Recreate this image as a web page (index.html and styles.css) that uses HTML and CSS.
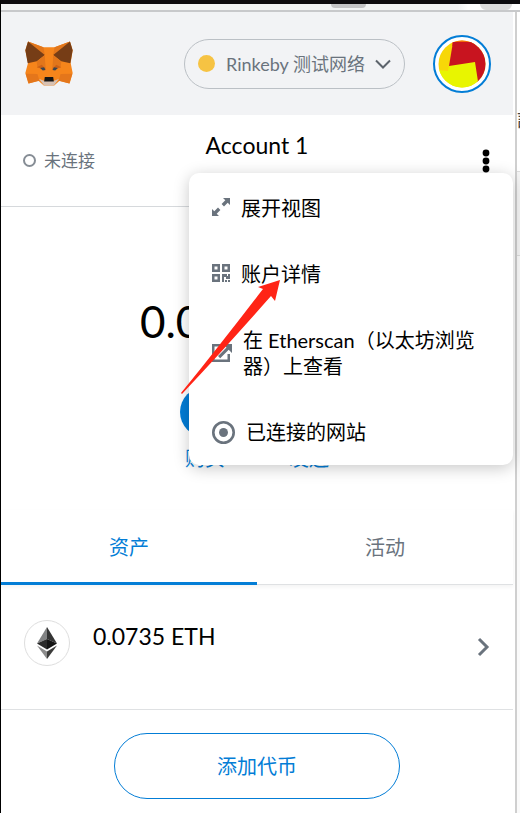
FILE: index.html
```html
<!DOCTYPE html>
<html lang="zh-CN">
<head>
  <meta charset="UTF-8">
  <meta name="viewport" content="width=device-width, initial-scale=1.0">
  <title>MetaMask</title>
  <link rel="stylesheet" href="styles.css">
</head>
<body>
  <div class="browser-strip">
    <span class="strip-tab"></span>
    <span class="strip-avatar"></span>
  </div>

  <div class="window">
    <main class="popup">
      <header class="app-header">
        <svg class="fox" viewBox="75 125 143 133" aria-label="MetaMask">
          <path fill="#f6851b" d="M84 126l46 17h33l46-17 8 26-6 38 6 30-9 31-30-8-16 14h-31l-16-14-30 8-9-31 8-30-8-38z"/>
          <path fill="#e2761b" d="M84 126l46 17 4 23zM209 126l-46 17-4 23z"/>
          <path fill="#763d16" d="M84 126l50 40-24 19-27 6-7-39zM209 126l-50 40 24 19 27 6 7-39z"/>
          <path fill="#e4761b" d="M77 222l35 1 6 20-32 8zM216 222l-35 1-6 20 32 8z"/>
          <path fill="#e2761b" d="M134 166l-24 20 2 18 26 6zM159 166l24 20-2 18-26 6z"/>
          <path fill="#cd6116" d="M110 203l15-8 12 14zM183 203l-15-8-12 14z"/>
          <path fill="#f6851b" d="M134 166h25l-5 66h-15z"/>
          <path fill="#3d4650" d="M120 205l12-2 4 8-8 1zM173 205l-12-2-4 8 8 1z"/>
          <path fill="#d7c1b3" d="M117 238l17 6h25l17-6-15 19h-29z"/>
          <path fill="#161616" d="M134 232h25l2 13h-29z"/>
        </svg>
        <button class="network" type="button">
          <span class="network-dot"></span>
          <span class="network-name">Rinkeby 测试网络</span>
          <svg class="chevron" viewBox="0 0 16 10"><path d="M1 1.500l7 7 7-7"/></svg>
        </button>
        <button class="identicon" type="button" aria-label="我的账户">
          <svg viewBox="0 0 48 48">
            <clipPath id="disc"><circle cx="24" cy="24" r="23.500"/></clipPath>
            <g clip-path="url(#disc)">
              <path fill="#f7d708" d="M0 0h48v48H0z"/>
              <path fill="#f3690c" d="M14 0h26v6H14z"/>
              <path fill="#c8141f" d="M15 2h33v42l-8-1-29-17z"/>
              <path fill="#e8f500" d="M0 30l10 1 1-5 26-4 4 26H0z"/>
            </g>
          </svg>
        </button>
      </header>

      <section class="menu-bar">
        <div class="status"><span class="status-dot"></span>未连接</div>
        <h1 class="account-name">Account 1</h1>
        <button class="more" type="button" aria-label="账户选项">
          <svg viewBox="0 0 8 24"><circle cx="4" cy="4" r="3.400"/><circle cx="4" cy="12" r="3.400"/><circle cx="4" cy="20" r="3.400"/></svg>
        </button>

        <div class="account-menu">
          <button class="menu-item" type="button">
            <svg class="icon" viewBox="0 0 20 20">
              <path d="M12 0h7v7l-2.300-2.300-3.700 3.700-2.400-2.400 3.700-3.700zM8 18H1v-7l2.300 2.300 3.700-3.700 2.400 2.400-3.700 3.700z"/>
            </svg>
            <span>展开视图</span>
          </button>
          <button class="menu-item" type="button">
            <svg class="icon" viewBox="0 0 20 20">
              <path fill-rule="evenodd" d="M1 0h8v8H1zM3.500 2.500v3h3v-3zM11 0h8v8h-8zM13.500 2.500v3h3v-3zM1 10h8v8H1zM3.500 12.500v3h3v-3zM11 10h5v2h1v-2h2v5h-4v-2h-2v5h-2zM14 16h2v2h-2zM17 16h2v2h-2z"/>
            </svg>
            <span>账户详情</span>
          </button>
          <button class="menu-item" type="button">
            <svg class="icon icon-link" viewBox="0 0 22 22">
              <path d="M9 2H1v18h18v-8h-2.500v5.500h-13v-13H9zM12 2h9v9l-3.300-3.300-8.500 8.500-2.200-2.200 8.500-8.500z"/>
            </svg>
            <span>在 Etherscan（以太坊浏览器）上查看</span>
          </button>
          <button class="menu-item" type="button">
            <svg class="icon icon-sites" viewBox="0 0 24 24">
              <circle class="ring" cx="12" cy="12" r="9.800"/><circle cx="12" cy="12" r="4.300"/>
            </svg>
            <span>已连接的网站</span>
          </button>
          <svg class="pointer" viewBox="0 0 100 116"><path d="M99 1l-5 21-4-5C62 49 31 83 1 115l-1-1C28 80 55 45 82 10l-5-2z"/></svg>
        </div>
      </section>

      <section class="overview">
        <p class="balance">0.0735 ETH</p>
        <div class="actions">
          <button class="action" type="button"><span class="action-circle"></span>购买</button>
          <button class="action" type="button"><span class="action-circle"></span>发送</button>
        </div>
      </section>

      <nav class="tabs">
        <button class="tab active" type="button">资产</button>
        <button class="tab" type="button">活动</button>
      </nav>

      <button class="asset" type="button">
        <span class="token">
          <svg viewBox="0 0 20 32">
            <path fill="#828384" d="M10 0L0 16.500 10 12z"/>
            <path fill="#343434" d="M10 0v12l10 4.500z"/>
            <path fill="#2b2b2b" d="M0 16.500L10 12v10.500z"/>
            <path fill="#141414" d="M20 16.500L10 12v10.500z"/>
            <path fill="#8c8c8c" d="M0 18.500l10 6V32z"/>
            <path fill="#3c3c3b" d="M20 18.500l-10 6V32z"/>
          </svg>
        </span>
        <span class="amount">0.0735 ETH</span>
        <svg class="arrow" viewBox="0 0 14 22"><path d="M3 3l8 8-8 8"/></svg>
      </button>

      <div class="add-row">
        <button class="add-token" type="button">添加代币</button>
      </div>
    </main>

    <aside class="behind">
      <span class="behind-text">詳</span>
      <span class="behind-box"></span>
    </aside>
  </div>
</body>
</html>
```

FILE: styles.css
```css
* {
  box-sizing: border-box;
}
body {
  margin: 0;
  min-height: 100vh;
  display: flex;
  flex-direction: column;
  border-top: 4px solid #0c0b0e;
  border-left: 1px solid #000;
  background: #fff;
  color: #000;
  font-family: Lato, "Noto Sans CJK SC", sans-serif;
  font-size: 20px;
  line-height: 26px;
}
button {
  margin: 0;
  padding: 0;
  border: none;
  background: none;
  color: inherit;
  font: inherit;
  cursor: pointer;
}
svg {
  display: block;
}

/* bottom edge of the browser toolbar */
.browser-strip {
  display: flex;
  justify-content: flex-end;
  gap: 114px;
  height: 8px;
  padding-right: 8px;
  overflow: hidden;
  background: linear-gradient(90deg, #f1f3f4 88%, #fff 90%);
  border-bottom: 2px solid #c8c9cb;
}
.strip-tab {
  width: 35px;
  height: 4px;
  border-radius: 0 0 18px 18px;
  background: #c3c4c6;
}
.strip-avatar {
  width: 32px;
  height: 6px;
  border-radius: 0 0 16px 16px;
  background: #dcdcdc;
}

.window {
  flex: 1;
  display: flex;
}
.popup {
  flex: 1;
  min-width: 0;
  border-right: 2px solid #fff;
}
.behind {
  width: 5px;
  overflow: hidden;
  border-left: 2px solid #cfcfcf;
  background: #fafafa;
}
.behind-text {
  display: block;
  width: 20px;
  height: 160px;
  padding-top: 94px;
  border-bottom: 1px solid #ddd;
  background: #fff;
  color: #444;
}
.behind-box {
  display: block;
  height: 84px;
  border-bottom: 1px solid #ddd;
  background: #f5f5f5;
}

.app-header {
  display: flex;
  align-items: center;
  height: 103px;
  padding: 0 22px 0 24px;
  background: #f2f3f5;
}
.fox {
  width: 48px;
  height: 45px;
  margin-right: auto;
}
.network {
  display: flex;
  align-items: center;
  width: 221px;
  height: 50px;
  padding: 0 13px;
  border: 1px solid #bbc0c5;
  border-radius: 25px;
  color: #6a737d;
  font-size: 18px;
}
.network-dot {
  width: 17px;
  height: 17px;
  margin-right: 11px;
  border-radius: 50%;
  background: #f6c343;
}
.chevron {
  width: 16px;
  height: 10px;
  margin-left: auto;
  fill: none;
  stroke: #5d646c;
  stroke-width: 2;
}
.identicon {
  width: 58px;
  height: 58px;
  margin-left: 28px;
  padding: 3px;
  border: 2px solid #037dd6;
  border-radius: 50%;
  background: #fff;
}

.menu-bar {
  position: relative;
  display: grid;
  grid-template-columns: 1fr auto 1fr;
  align-items: center;
  height: 92px;
  padding: 0 22px;
  border-bottom: 1px solid #d6d9dc;
}
.status {
  display: flex;
  align-items: center;
  gap: 8px;
  color: #6a737d;
  font-size: 17px;
}
.status-dot {
  width: 13px;
  height: 13px;
  border: 2px solid #868d95;
  border-radius: 50%;
}
.account-name {
  align-self: start;
  margin: 17px 0 0;
  font-size: 23px;
  font-weight: 400;
}
.more {
  justify-self: end;
}
.more svg {
  width: 10px;
  height: 24px;
}

.account-menu {
  position: absolute;
  z-index: 1;
  top: 58px;
  right: 0;
  width: 324px;
  padding-bottom: 2px;
  border-radius: 10px;
  background: #fff;
  box-shadow: 0 3px 16px rgba(0, 0, 0, 0.22);
}
.menu-item {
  display: flex;
  align-items: center;
  gap: 10px;
  width: 100%;
  padding: 22px 22px 18px;
  text-align: left;
}
.icon {
  flex: none;
  width: 20px;
  height: 20px;
  fill: #6a737d;
}
.icon-link {
  width: 22px;
  height: 22px;
}
.icon-sites {
  width: 25px;
  height: 25px;
}
.ring {
  fill: none;
  stroke: #6a737d;
  stroke-width: 2.5;
}
.pointer {
  position: absolute;
  top: 106px;
  left: -8px;
  width: 100px;
  height: 116px;
  fill: #ff2416;
  pointer-events: none;
}

.overview {
  display: flex;
  flex-direction: column;
  align-items: center;
  height: 303px;
  padding-top: 86px;
}
.balance {
  margin: 0 0 38px;
  font-size: 44px;
  line-height: 56px;
}
.actions {
  display: flex;
  gap: 54px;
}
.action {
  display: flex;
  flex-direction: column;
  align-items: center;
  gap: 8px;
  width: 50px;
  color: #037dd6;
}
.action-circle {
  width: 50px;
  height: 50px;
  border-radius: 50%;
  background: #037dd6;
}

.tabs {
  display: flex;
  height: 75px;
  border-bottom: 1px solid #dfe1e3;
  box-shadow: 0 2px 4px rgba(0, 0, 0, 0.05);
}
.tab {
  flex: 1;
  height: 75px;
  padding-top: 2px;
  border-bottom: 3px solid transparent;
  color: #6a737d;
}
.tab.active {
  border-color: #037dd6;
  color: #037dd6;
}

.asset {
  display: flex;
  align-items: flex-start;
  width: 100%;
  height: 125px;
  padding: 35px 23px;
  border-bottom: 1px solid #dfe1e3;
}
.token {
  display: flex;
  align-items: center;
  justify-content: center;
  width: 46px;
  height: 46px;
  margin-right: 23px;
  border: 1px solid #dedede;
  border-radius: 50%;
}
.token svg {
  width: 20px;
  height: 32px;
}
.amount {
  margin-top: 3px;
  font-size: 23px;
}
.arrow {
  align-self: center;
  width: 14px;
  height: 22px;
  margin-left: auto;
  fill: none;
  stroke: #6a737d;
  stroke-width: 3;
}

.add-row {
  display: flex;
  justify-content: center;
  padding-top: 23px;
}
.add-token {
  width: 56%;
  height: 66px;
  border: 1px solid #037dd6;
  border-radius: 33px;
  color: #037dd6;
}
```
